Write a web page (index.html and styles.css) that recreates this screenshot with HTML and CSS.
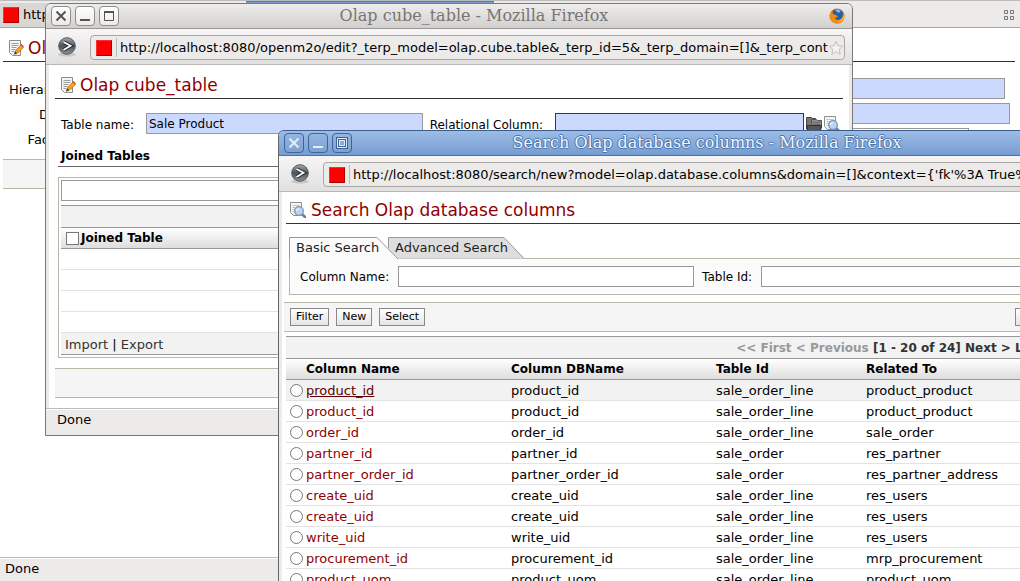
FILE: index.html
```html
<!DOCTYPE html>
<html lang="en">
<head>
<meta charset="utf-8">
<title>Search Olap database columns</title>
<link rel="stylesheet" href="styles.css">
</head>
<body>
<svg class="defs" width="0" height="0" aria-hidden="true">
  <defs>
    <linearGradient id="ball" x1="0" y1="0" x2="0" y2="1"><stop offset="0" stop-color="#a4aab0"/><stop offset=".5" stop-color="#4c535a"/><stop offset="1" stop-color="#8b959e"/></linearGradient>
    <symbol id="go" viewBox="0 0 20 20">
      <ellipse cx="10" cy="17.500" rx="9" ry="2" fill="#c9c8c6"/>
      <circle cx="10" cy="9" r="8.300" fill="url(#ball)" stroke="#555b61"/>
      <path d="M6.500 5l7 3.800-7 4.200" fill="none" stroke="#24282c" stroke-width="3.600"/>
      <path d="M6.500 5l7 3.800-7 4.200" fill="none" stroke="#fff" stroke-width="1.800"/>
    </symbol>
    <symbol id="edit" viewBox="0 0 16 16">
      <path d="M1.500 .500h11v15h-8l-3-3z" fill="#f5f5f4" stroke="#8a8c88"/>
      <path d="M3.500 3.500h7M3.500 5.500h7M3.500 7.500h5M3.500 9.500h4M3.500 11.500h3" stroke="#9b9d9a"/>
      <path d="M6.500 14l1.500-4 5-5 2.500 2.300-5 5.200z" fill="#f9a11b" stroke="#b5651d" stroke-width=".7"/>
      <path d="M12.500 5l1-1 2.300 2.200-1 1.200z" fill="#d4473a"/>
      <path d="M6 14.500l1.200-3 2 2z" fill="#333"/>
    </symbol>
    <symbol id="find" viewBox="0 0 16 16">
      <path d="M.500 .500h11v13h-8l-3-3z" fill="#f5f5f4" stroke="#8d8f8b"/>
      <path d="M2.500 3.500h7M2.500 5.500h3M2.500 7.500h2M2.500 9.500h3" stroke="#c2c4c0"/>
      <path d="M12 12l3 3" stroke="#74808e" stroke-width="2.500" stroke-linecap="round"/>
      <circle cx="9" cy="9" r="4.300" fill="#b9d5f3" stroke="#7e98b5" stroke-width="1.300"/>
      <path d="M6.500 9a3 3 0 0 1 2.500-2.500" fill="none" stroke="#fff"/>
    </symbol>
    <symbol id="folder" viewBox="0 0 16 16">
      <path d="M.500 13V1.500h5l1 1h3V13z" fill="#777" stroke="#444"/>
      <path d="M5.500 9V3.500h5l1 1h4V12h-10z" fill="#8b8b8b" stroke="#555"/>
      <path d="M7 6.500h7M7 8.500h7" stroke="#666"/>
      <path d="M1 9.500h14.500L14.500 15H1.500z" fill="#555" stroke="#333"/>
    </symbol>
    <symbol id="close" viewBox="0 0 18 18"><path d="M4.500 4.500l9 9M13.500 4.500l-9 9" stroke="currentColor" stroke-width="2" fill="none"/></symbol>
    <symbol id="min" viewBox="0 0 18 18"><path d="M4 13h10" stroke="currentColor" stroke-width="2"/></symbol>
    <symbol id="max" viewBox="0 0 18 18"><path d="M4.500 4.500h9v9h-9z" stroke="currentColor" fill="none"/><path d="M4 5h10" stroke="currentColor" stroke-width="2"/></symbol>
    <symbol id="maxed" viewBox="0 0 18 18"><path d="M4.500 4.500h9v9h-9z" stroke="#3d6396" stroke-width="3" fill="none"/><path d="M4.500 4.500h9v9h-9z" stroke="#e3edfa" fill="none"/><path d="M6.500 6.500h5v5h-5z" stroke="#e3edfa" fill="none"/></symbol>
  </defs>
</svg>
<div class="desktop">

  <main class="browser">
    <div class="tabedge"></div>
    <header class="navbar"><i class="favicon"></i><span>http</span>
      <svg class="grid" viewBox="0 0 10 10"><path d="M.500 .500h3v3h-3zM6.500 .500h3v3h-3zM.500 6.500h3v3h-3zM6.500 6.500h3v3h-3z" fill="none" stroke="#777"/></svg>
    </header>
    <div class="page">
      <h1 class="heading"><svg><use href="#edit"/></svg>Ol</h1>
      <form class="fields">
        <label for="f1">Hierar</label><input id="f1" class="field blue">
        <label for="f2">D</label><input id="f2" class="field blue wide">
        <label for="f3">Fac</label><input id="f3" class="field short">
      </form>
      <div class="band plain"></div>
    </div>
    <footer class="status">Done</footer>
  </main>

  <section class="window editor">
    <header class="titlebar">
      <button class="wbtn" aria-label="Close"><svg><use href="#close"/></svg></button>
      <button class="wbtn" aria-label="Minimize"><svg><use href="#min"/></svg></button>
      <button class="wbtn" aria-label="Maximize"><svg><use href="#max"/></svg></button>
      <span class="wtitle">Olap cube_table - Mozilla Firefox</span>
      <svg class="fox" viewBox="0 0 16 16"><circle cx="8" cy="8" r="7.500" fill="#e36a12"/><circle cx="8.500" cy="6.500" r="5.500" fill="#2c5da9"/><path d="M6 2l3-1 3 2-2 2-2-1z" fill="#79b8e8"/><path d="M1 5C0 11 3 15.500 8 15.500S15.500 12 15.500 7L14 4c1 5-2 8-5 8-2 0-3-1-3-2l3-1-2-2-3-1-1-3z" fill="#f28c17"/><path d="M15 7c.500 4-3 7.500-7 7 3-.500 5-2 6-5z" fill="#fbd235"/></svg>
    </header>
    <div class="toolbar">
      <svg class="go"><use href="#go"/></svg>
      <div class="urlbar"><i class="favicon"></i><input class="url" aria-label="Address" value="http://localhost:8080/openm2o/edit?_terp_model=olap.cube.table&amp;_terp_id=5&amp;_terp_domain=[]&amp;_terp_cont">
        <svg class="star" viewBox="0 0 18 18"><path d="M9 1.500l2.200 5 5.300.500-4 3.600 1.200 5.400L9 13.200 4.300 16l1.200-5.400-4-3.600 5.300-.500z" fill="#f4f3f2" stroke="#bdbbb9"/></svg></div>
    </div>
    <div class="content">
      <h1 class="heading"><svg><use href="#edit"/></svg>Olap cube_table</h1>
      <form class="row">
        <label class="l1" for="tn">Table name:</label><input id="tn" class="field blue" value="Sale Product">
        <label class="l2" for="rc">Relational Column:</label><input id="rc" class="field blue required">
        <span class="tools"><svg><use href="#folder"/></svg><svg><use href="#find"/></svg></span>
      </form>
      <h2 class="group">Joined Tables</h2>
      <div class="box">
        <input class="field" aria-label="Joined Tables">
        <div class="list">
          <div class="strip"></div>
          <label class="listhead"><input type="checkbox">Joined Table</label>
          <div class="empty"></div><div class="empty"></div><div class="empty"></div><div class="empty"></div>
          <div class="links"><a href="#">Import</a> | <a href="#">Export</a></div>
        </div>
      </div>
      <div class="band plain"></div>
    </div>
    <footer class="status">Done</footer>
  </section>

  <section class="window search">
    <header class="titlebar">
      <button class="wbtn" aria-label="Close"><svg><use href="#close"/></svg></button>
      <button class="wbtn" aria-label="Minimize"><svg><use href="#min"/></svg></button>
      <button class="wbtn" aria-label="Restore"><svg><use href="#maxed"/></svg></button>
      <span class="wtitle">Search Olap database columns - Mozilla Firefox</span>
    </header>
    <div class="toolbar">
      <svg class="go"><use href="#go"/></svg>
      <div class="urlbar"><i class="favicon"></i><input class="url" aria-label="Address" value="http://localhost:8080/search/new?model=olap.database.columns&amp;domain=[]&amp;context={'fk'%3A True%2"></div>
    </div>
    <div class="content">
      <h1 class="heading"><svg><use href="#find"/></svg>Search Olap database columns</h1>
      <div class="tabs">
        <button class="tab active"><svg viewBox="0 0 138 22"><path d="M.500 22V.500H88L109 22" fill="#fbfbfb" stroke="#999"/></svg><span>Basic Search</span></button>
        <button class="tab"><svg viewBox="0 0 138 22"><path d="M.500 12V.500H116L136 21.500H10z" fill="#dedede"/><path d="M.500 11V.500H116L136 21.500" fill="none" stroke="#999"/></svg><span>Advanced Search</span></button>
      </div>
      <form class="panel">
        <label for="cn">Column Name:</label><input id="cn" class="field">
        <label for="ti">Table Id:</label><input id="ti" class="field">
      </form>
      <div class="band actions">
        <button class="btn">Filter</button><button class="btn">New</button><button class="btn">Select</button><button class="btn last" aria-label="Close"></button>
      </div>
      <nav class="pager"><span>&lt;&lt; First</span> <span>&lt; Previous</span> <b>[1 - 20 of 24]</b> <a href="#">Next &gt;</a> <a href="#">Last &gt;&gt;</a></nav>
      <table class="grid-table">
        <thead><tr><th class="pick"></th><th class="name">Column Name</th><th class="name">Column DBName</th><th class="tid">Table Id</th><th>Related To</th></tr></thead>
        <tbody>
          <tr class="hover"><td><input type="radio" name="r" aria-label="product_id"></td><td><a href="#">product_id</a></td><td>product_id</td><td>sale_order_line</td><td>product_product</td></tr>
          <tr><td><input type="radio" name="r" aria-label="product_id"></td><td><a href="#">product_id</a></td><td>product_id</td><td>sale_order_line</td><td>product_product</td></tr>
          <tr><td><input type="radio" name="r" aria-label="order_id"></td><td><a href="#">order_id</a></td><td>order_id</td><td>sale_order_line</td><td>sale_order</td></tr>
          <tr><td><input type="radio" name="r" aria-label="partner_id"></td><td><a href="#">partner_id</a></td><td>partner_id</td><td>sale_order</td><td>res_partner</td></tr>
          <tr><td><input type="radio" name="r" aria-label="partner_order_id"></td><td><a href="#">partner_order_id</a></td><td>partner_order_id</td><td>sale_order</td><td>res_partner_address</td></tr>
          <tr><td><input type="radio" name="r" aria-label="create_uid"></td><td><a href="#">create_uid</a></td><td>create_uid</td><td>sale_order_line</td><td>res_users</td></tr>
          <tr><td><input type="radio" name="r" aria-label="create_uid"></td><td><a href="#">create_uid</a></td><td>create_uid</td><td>sale_order_line</td><td>res_users</td></tr>
          <tr><td><input type="radio" name="r" aria-label="write_uid"></td><td><a href="#">write_uid</a></td><td>write_uid</td><td>sale_order_line</td><td>res_users</td></tr>
          <tr><td><input type="radio" name="r" aria-label="procurement_id"></td><td><a href="#">procurement_id</a></td><td>procurement_id</td><td>sale_order_line</td><td>mrp_procurement</td></tr>
          <tr><td><input type="radio" name="r" aria-label="product_uom"></td><td><a href="#">product_uom</a></td><td>product_uom</td><td>sale_order_line</td><td>product_uom</td></tr>
        </tbody>
      </table>
    </div>
  </section>
</div>
</body>
</html>
```

FILE: styles.css
```css
* { box-sizing: border-box; }
body { margin: 0; font: 12px/16px "DejaVu Sans", sans-serif; color: #000; background: #fff; }
button, input { font: inherit; color: inherit; margin: 0; padding: 0; }
a { color: #333; text-decoration: none; }
.defs { position: absolute; }
.desktop { position: relative; height: 100vh; overflow: hidden; }

/* main browser window */
.browser { height: 100%; display: flex; flex-direction: column; background: #fff; }
.tabedge { height: 3px; background: linear-gradient(#3f6ea8, #8fb1dd) 246px 0 / 248px 2px no-repeat, #ecebea; border-top: 1px solid #bbb; }
.navbar { height: 25px; padding: 0 6px 0 3px; display: flex; align-items: center; gap: 4px; font-size: 13px; background: linear-gradient(90deg, #d9d7d5 60px, #ecebea 60px); border-bottom: 1px solid #aaa8a6; }
.favicon { width: 16px; height: 16px; flex: none; background: #f00; border: 1px solid #c00; border-color: #e33 #a00 #a00 #e33; }
.grid { width: 10px; height: 10px; margin-left: auto; }
.page { flex: 1; padding: 6px 5px 0 3px; }
.heading { margin: 0; height: 28px; padding: 0 0 0 5px; display: flex; align-items: center; gap: 4px; font-size: 17px; line-height: 20px; font-weight: 400; color: #900000; border-bottom: 1px solid #333; }
.heading svg { width: 16px; height: 16px; }
.fields { display: grid; grid-template-columns: 46px 1fr; gap: 4px 8px; padding-top: 16px; font-size: 13px; align-items: center; }
.fields label { text-align: right; padding-top: 2px; }
.fields .blue { width: auto; margin-right: 10px; }
.fields .wide { margin-right: 5px; }
.fields .short { margin-right: 46px; }
.field { height: 21px; min-width: 0; padding: 0 2px; border: 1px solid #999; background: #fff; font-size: 12px; }
.blue { background: #ccd9ff; }
.required { border-color: #8a0f45; }
.band { height: 30px; background: #f5f5f5; border: solid #b8b8a8; border-width: 1px 0; }
.page .band { margin-top: 10px; }
.status { height: 24px; padding: 3px 5px; font-size: 13px; background: #ecebea; border-top: 1px solid #bbb; box-shadow: inset 0 1px #fff; }

/* popup windows */
.window { position: absolute; border: 1px solid #7b7975; border-radius: 6px 6px 0 0; background: #ecebea; overflow: hidden; }
.editor { left: 45px; right: 167px; top: 3px; }
.search { left: 278px; right: -114px; top: 130px; }
.titlebar { height: 25px; padding: 0 7px 0 5px; display: flex; align-items: center; gap: 4px; background: linear-gradient(#eeedec, #d2d0ce); border-bottom: 1px solid #999693; color: #777573; }
.wbtn { width: 20px; height: 20px; flex: none; border: 1px solid #8f8d8a; border-radius: 4px; background: linear-gradient(#fff, #ebeae9); color: #555; }
.wbtn svg { display: block; width: 18px; height: 18px; }
.wtitle { flex: 1; text-align: center; font: 16px/20px "DejaVu Serif", serif; white-space: nowrap; }
.search .wtitle { padding-right: 68px; }
.fox { width: 16px; height: 16px; }
.toolbar { height: 36px; padding: 6px 7px 5px 11px; display: flex; gap: 13px; background: linear-gradient(#f7f5f5, #e2e0df); border-bottom: 1px solid #bab8b5; }
.go { width: 20px; height: 20px; flex: none; margin-top: 2px; }
.urlbar { flex: 1; height: 25px; display: flex; align-items: center; padding: 0 0 0 5px; background: #ecebea; border: 1px solid #a9a7a4; border-radius: 4px; }
.url { flex: 1; min-width: 0; height: 19px; margin-left: 4px; border: 0; border-left: 1px solid #bbb; padding: 0 0 0 3px; background: none; font-size: 13px; }
.star { flex: none; width: 16px; height: 16px; }
.content { margin: 0 3px; padding: 6px 6px 0; background: #fff; }
.row { display: flex; align-items: center; padding: 14px 3px 0 6px; }
.row label { padding-top: 2px; white-space: nowrap; }
.l1 { width: 85px; }
.l2 { width: 125px; }
.row .field { flex: 277 1 0; margin-right: 7px; }
.row .required { flex-grow: 249; margin-right: 2px; }
.tools { display: flex; gap: 2px; }
.tools svg { width: 16px; height: 16px; }
.group { margin: 13px 0 10px 3px; height: 20px; padding: 1px 3px; font-size: 12px; line-height: 16px; border-bottom: 1px solid #666; }
.box { margin-left: 3px; padding: 2px; border: 1px solid #b8b8a8; }
.box > .field { width: 100%; display: block; }
.list { margin-top: 4px; border: solid #999; border-width: 1px 0; }
.strip { height: 21px; background: #f2f2f2; }
.listhead { height: 22px; padding-left: 5px; display: flex; align-items: center; gap: 2px; font-weight: 700; background: linear-gradient(#fff, #ddd); border: solid #999; border-width: 1px 0; }
input[type=checkbox] { appearance: none; width: 13px; height: 13px; border: 1px solid #777; background: #fff; }
.empty { height: 21px; border-bottom: 1px solid #e2e2e2; }
.links { height: 21px; padding: 4px 4px 0; background: #f2f2f2; font-size: 13px; line-height: 16px; }
.editor .band { margin: 10px 0; }
.editor .content { display: flow-root; }
.editor .status { height: 27px; padding: 3px 11px; }

/* search window */
.search { border-color: #385d8e #666 #666; }
.search .titlebar { background: linear-gradient(#9dbce6, #759dd1); border-color: #4873aa; color: #eef5ff; text-shadow: 0 1px #4d76aa, 1px 0 #4d76aa, -1px 0 #4d76aa, 0 -1px #4d76aa; }
.search .wbtn { background: linear-gradient(#94b5e1, #7ba1d3); border-color: #3d6598; color: #e3edfa; }
.search .content { padding: 4px 4px 0; }
.search .heading { padding-left: 4px; gap: 5px; }
.tabs { display: flex; height: 21px; margin: 13px 0 0 3px; }
.tab { position: relative; z-index: 1; width: 99px; height: 22px; border: 0; background: none; text-align: left; color: #222; }
.tab + .tab { z-index: 0; width: 138px; }
.tab svg { position: absolute; left: 0; top: 0; width: 138px; height: 22px; }
.tab span { position: relative; padding-left: 7px; white-space: nowrap; font-size: 13px; }
.panel { margin-left: 3px; height: 37px; display: flex; align-items: center; padding: 0 68px 0 10px; background: #fbfbfb; border: 1px solid #b8b8a8; }
.panel label { padding-top: 1px; }
.panel .field { flex: 1; margin: 0 0 0 9px; }
.panel .field + label { margin-left: 8px; }
.search .band { margin: 7px -2px 4px; padding: 0 6px; display: flex; align-items: center; gap: 7px; }
.btn { height: 18px; padding: 0 5px; border: 1px solid #888; background: linear-gradient(#fff, #e4e4e4); font-size: 11px; line-height: 14px; }
.last { width: 107px; margin-left: auto; }
.pager { height: 22px; padding: 3px 58px 0 0; text-align: right; font-weight: 700; color: #333; background: #f2f2f2; border-top: 1px solid #999; }
.pager span { color: #999; }
.grid-table { width: 100%; table-layout: fixed; border-collapse: separate; border-spacing: 0; font-size: 13px; }
.grid-table th { height: 22px; padding: 0; text-align: left; font-size: 12px; background: linear-gradient(#fff, #ddd); border: solid #999; border-width: 1px 0; }
.grid-table td { height: 21px; padding: 0; border-bottom: 1px solid #e2e2e2; }
.grid-table td + td { padding-top: 2px; }
.grid-table .pick { width: 20px; }
.grid-table .name { width: 205px; }
.grid-table .tid { width: 150px; }
.grid-table a { color: #900000; }
.hover { background: #f2f2f2; }
.grid-table .hover a { color: #600000; text-decoration: underline; }
input[type=radio] { appearance: none; display: block; width: 13px; height: 13px; margin-left: 4px; border: 1px solid #777; border-radius: 50%; background: #fff; }
```
